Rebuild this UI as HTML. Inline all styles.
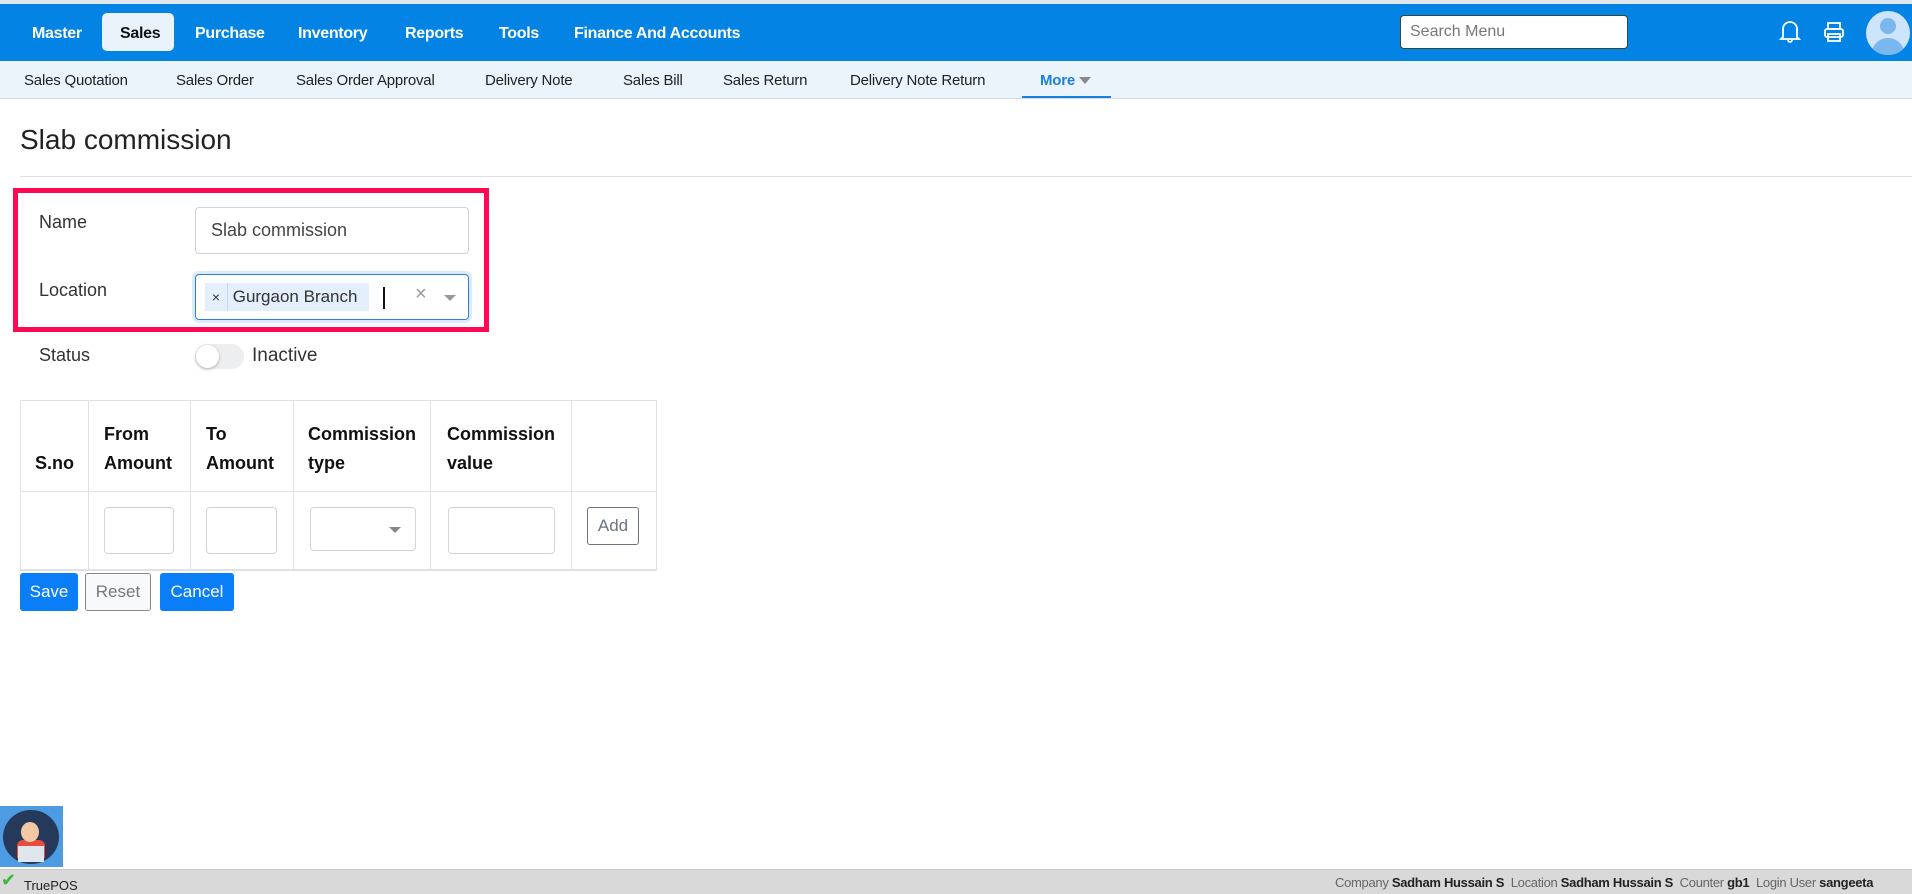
<!DOCTYPE html>
<html><head><meta charset="utf-8"><style>
*{box-sizing:border-box;margin:0;padding:0}
body{width:1912px;height:894px;position:relative;overflow:hidden;background:#fff;font-family:"Liberation Sans",sans-serif;color:#212529}
.a{position:absolute}
.nav{left:0;top:0;width:1912px;height:61px;background:#0384e4;border-top:4px solid #dfe6ee}
.ni{top:25px;color:#fff;font-weight:bold;font-size:16px;letter-spacing:-0.3px}
.sub{left:0;top:61px;width:1912px;height:38px;background:#ebf3fb;border-bottom:1px solid #d3dde8}
.si{top:72px;font-size:15px;color:#222;letter-spacing:-0.2px}
.inp{border:1px solid #ced4da;border-radius:4px;background:#fff}
.th{font-weight:bold;font-size:18px;line-height:29px;color:#111}
.lbl{font-size:18px;color:#333}
.btn{border-radius:3px;font-size:17px;text-align:center;line-height:38px;color:#fff;background:#0a7ef7}
</style></head><body>
<div class="a nav"></div>
<div class="a" style="left:102px;top:13px;width:72px;height:38px;background:#eaf3fb;border-radius:5px"></div>
<div class="a ni" style="left:32px">Master</div>
<div class="a ni" style="left:120px;color:#111">Sales</div>
<div class="a ni" style="left:195px">Purchase</div>
<div class="a ni" style="left:298px">Inventory</div>
<div class="a ni" style="left:405px">Reports</div>
<div class="a ni" style="left:499px">Tools</div>
<div class="a ni" style="left:574px">Finance And Accounts</div>
<div class="a" style="left:1400px;top:15px;width:228px;height:34px;background:#fff;border:1px solid #2d4a3a;border-radius:4px;padding:7px 9px;font-size:16px;color:#777">Search Menu</div>
<svg class="a" style="left:1778px;top:18px" width="24" height="26" viewBox="0 0 24 26" fill="none" stroke="#fff" stroke-width="1.8"><path d="M5 19V11a7 7 0 0 1 14 0v8l2 2H3z"/><path d="M10 22a2 2 0 0 0 4 0"/></svg>
<svg class="a" style="left:1822px;top:20px" width="24" height="24" viewBox="0 0 24 24" fill="none" stroke="#fff" stroke-width="1.8"><rect x="6" y="3" width="12" height="6"/><rect x="3" y="9" width="18" height="8" rx="2"/><rect x="6" y="14" width="12" height="7"/></svg>
<div class="a" style="left:1866px;top:11px;width:44px;height:44px;border-radius:50%;background:#cde4fb;overflow:hidden"><div class="a" style="left:14px;top:7px;width:16px;height:16px;border-radius:50%;background:#7bb7ef"></div><div class="a" style="left:6px;top:27px;width:32px;height:30px;border-radius:50%;background:#7bb7ef"></div></div>
<div class="a sub"></div>
<div class="a si" style="left:24px">Sales Quotation</div>
<div class="a si" style="left:176px">Sales Order</div>
<div class="a si" style="left:296px">Sales Order Approval</div>
<div class="a si" style="left:485px">Delivery Note</div>
<div class="a si" style="left:623px">Sales Bill</div>
<div class="a si" style="left:723px">Sales Return</div>
<div class="a si" style="left:850px">Delivery Note Return</div>
<div class="a si" style="left:1040px;color:#1a7fe0;font-weight:bold">More <span style="display:inline-block;border:6px solid transparent;border-top:7px solid #888;vertical-align:-5px"></span></div>
<div class="a" style="left:1022px;top:96px;width:89px;height:2px;background:#1a7fe0"></div>
<div class="a" style="left:20px;top:124px;font-size:28px;color:#222">Slab commission</div>
<div class="a" style="left:20px;top:176px;width:1892px;height:1px;background:#dde1e5"></div>
<div class="a" style="left:13px;top:188px;width:476px;height:144px;border:5px solid #ff0a52"></div>
<div class="a lbl" style="left:39px;top:212px">Name</div>
<div class="a inp" style="left:195px;top:207px;width:274px;height:47px;padding:12px 15px;font-size:18px;color:#444">Slab commission</div>
<div class="a lbl" style="left:39px;top:280px">Location</div>
<div class="a" style="left:195px;top:274px;width:274px;height:46px;border:1px solid #2b7fe3;border-radius:4px;box-shadow:0 0 0 3px #dcebfb"></div>
<div class="a" style="left:205px;top:283px;width:164px;height:28px;background:#e3effc;font-size:17px;line-height:28px;color:#333"><span style="display:inline-block;width:23px;text-align:center;border-right:1px solid #c5d8ee;font-size:14px">×</span> Gurgaon Branch</div>
<div class="a" style="left:383px;top:287px;width:2px;height:22px;background:#111"></div>
<div class="a" style="left:415px;top:283px;font-size:20px;color:#999">×</div>
<div class="a" style="left:444px;top:295px;border:6px solid transparent;border-top:6px solid #999"></div>
<div class="a lbl" style="left:39px;top:345px">Status</div>
<div class="a" style="left:195px;top:344px;width:49px;height:25px;border-radius:13px;background:#eceef0"></div>
<div class="a" style="left:196px;top:345px;width:23px;height:23px;border-radius:50%;background:#fff;box-shadow:0 1px 3px #aaa"></div>
<div class="a lbl" style="left:252px;top:345px;font-size:19px">Inactive</div>
<div class="a" style="left:20px;top:400px;width:637px;height:171px;border:1px solid #dee2e6"></div>
<div class="a" style="left:20px;top:491px;width:637px;height:1px;background:#dee2e6"></div>
<div class="a" style="left:20px;top:569px;width:637px;height:2px;background:#dee2e6"></div>
<div class="a" style="left:88px;top:400px;width:1px;height:171px;background:#dee2e6"></div>
<div class="a" style="left:190px;top:400px;width:1px;height:171px;background:#dee2e6"></div>
<div class="a" style="left:293px;top:400px;width:1px;height:171px;background:#dee2e6"></div>
<div class="a" style="left:430px;top:400px;width:1px;height:171px;background:#dee2e6"></div>
<div class="a" style="left:571px;top:400px;width:1px;height:171px;background:#dee2e6"></div>
<div class="a th" style="left:35px;top:449px">S.no</div>
<div class="a th" style="left:104px;top:420px">From<br>Amount</div>
<div class="a th" style="left:206px;top:420px">To<br>Amount</div>
<div class="a th" style="left:308px;top:420px">Commission<br>type</div>
<div class="a th" style="left:447px;top:420px">Commission<br>value</div>
<div class="a inp" style="left:104px;top:507px;width:70px;height:47px"></div>
<div class="a inp" style="left:206px;top:507px;width:71px;height:47px"></div>
<div class="a inp" style="left:310px;top:507px;width:106px;height:44px"></div>
<div class="a" style="left:389px;top:527px;border:6px solid transparent;border-top:6px solid #888"></div>
<div class="a inp" style="left:448px;top:507px;width:107px;height:47px"></div>
<div class="a" style="left:587px;top:507px;width:52px;height:38px;border:1px solid #6c757d;border-radius:3px;font-size:17px;color:#6c757d;text-align:center;line-height:36px">Add</div>
<div class="a btn" style="left:20px;top:573px;width:58px">Save</div>
<div class="a btn" style="left:85px;top:573px;width:66px;background:#f8f9fa;border:1px solid #888;color:#777;line-height:36px">Reset</div>
<div class="a btn" style="left:160px;top:573px;width:74px">Cancel</div>
<div class="a" style="left:0;top:806px;width:63px;height:61px;background:#4d9be3"><div class="a" style="left:3px;top:4px;width:56px;height:54px;border-radius:50%;background:#25395a"></div><div class="a" style="left:17px;top:34px;width:28px;height:18px;background:#e74c3c;border-radius:6px 6px 0 0"></div><div class="a" style="left:21px;top:16px;width:18px;height:20px;border-radius:50%;background:#f3c9a5"></div><div class="a" style="left:18px;top:40px;width:26px;height:16px;background:#dfe6ec"></div></div>
<div class="a" style="left:0;top:869px;width:1912px;height:25px;background:#d9d9d9;border-top:1px solid #c8c8c8"></div>
<div class="a" style="left:1px;top:871px;color:#3cb83c;font-size:18px;line-height:18px">✔</div>
<div class="a" style="left:24px;top:878px;font-size:13px;color:#222">TruePOS</div>
<div class="a" style="left:1335px;top:875px;font-size:13px;color:#666;letter-spacing:-0.3px">Company <b style="color:#222">Sadham Hussain S</b> &nbsp;Location <b style="color:#222">Sadham Hussain S</b> &nbsp;Counter <b style="color:#222">gb1</b> &nbsp;Login User <b style="color:#222">sangeeta</b></div>
</body></html>
